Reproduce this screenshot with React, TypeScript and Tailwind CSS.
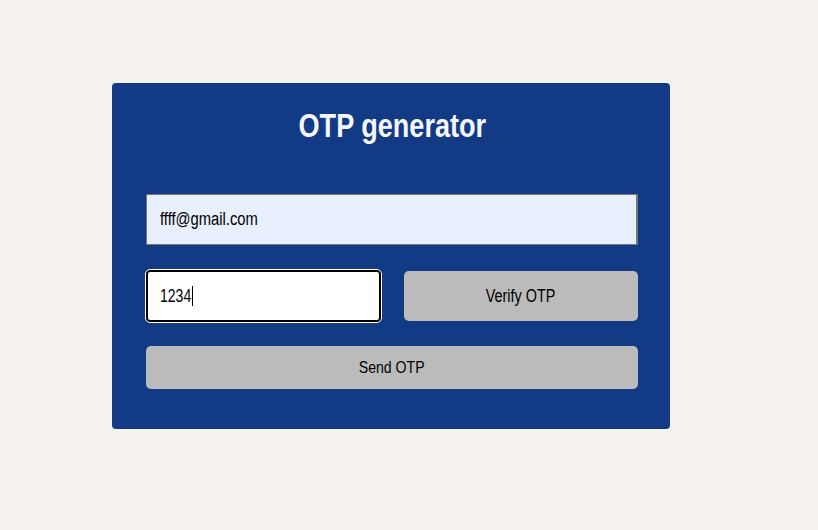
import { useState } from "react";

const font = { fontFamily: '"Liberation Sans", Arial, sans-serif' };

const App = () => {
  const [email] = useState("ffff@gmail.com");
  const [otp] = useState("1234");

  return (
    <div className="min-h-[530px] w-full bg-[#f5f1ed] pt-[83px] pl-[112px]" style={font}>
      <div className="w-[558px] rounded-[4px] bg-[#133a84] pl-[34px] pr-[32px] pt-[23px] pb-[40px]">
        {/* Title */}
        <h1 className="text-center text-[33px] font-bold leading-[40px] text-[#f4f7ff]">
          <span className="inline-block scale-x-[0.82]">OTP generator</span>
        </h1>

        {/* Email */}
        <div className="mt-[48px] flex h-[51px] items-center border border-r-2 border-[#767676] bg-[#e8f0fe] pl-[13px] text-[18px] text-black">
          <span className="inline-block origin-left scale-x-[0.82]">{email}</span>
        </div>

        {/* OTP + verify */}
        <div className="mt-[25px] grid grid-cols-2 gap-[23px]">
          <div className="flex h-[52px] items-center rounded-[4px] border-2 border-black bg-white pl-[12px] text-[18px] text-black outline outline-1 outline-white">
            <span className="inline-block w-[32px] origin-left scale-x-[0.78] whitespace-nowrap">{otp}</span>
            <span className="inline-block h-[20px] w-px bg-black" />
          </div>
          <button className="mt-px h-[50px] rounded-[5px] bg-[#bbbbbb] text-[18px] text-black">
            <span className="inline-block scale-x-[0.8]">Verify OTP</span>
          </button>
        </div>

        {/* Send */}
        <button className="mt-[24px] h-[43px] w-full rounded-[5px] bg-[#bbbbbb] text-[17px] text-black">
          <span className="inline-block scale-x-[0.83]">Send OTP</span>
        </button>
      </div>
    </div>
  );
};

export default App;
